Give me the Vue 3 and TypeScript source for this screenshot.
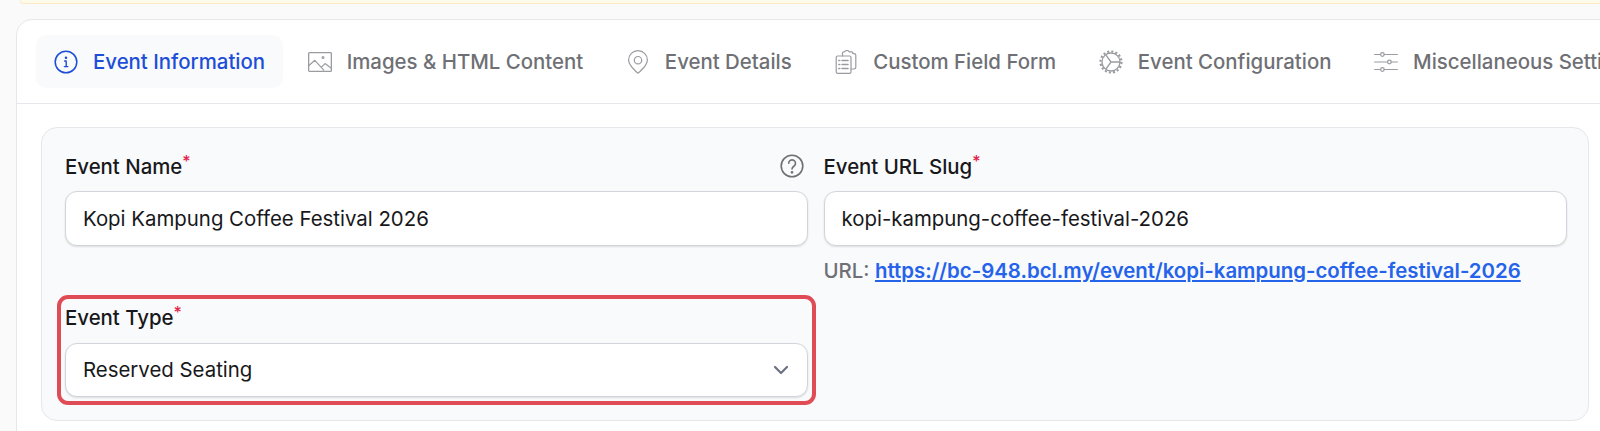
<script setup lang="ts">
const tabs = [
  { key: 'info', label: 'Event Information' },
  { key: 'image', label: 'Images & HTML Content' },
  { key: 'pin', label: 'Event Details' },
  { key: 'form', label: 'Custom Field Form' },
  { key: 'gear', label: 'Event Configuration' },
  { key: 'sliders', label: 'Miscellaneous Settings' },
]
</script>

<template>
  <div class="page">
    <div class="banner"></div>
    <section class="card">
      <nav class="tabs">
        <div v-for="(t, i) in tabs" :key="t.key" class="tab" :class="{ active: i === 0 }">
          <svg class="ico" viewBox="0 0 24 24" fill="none" stroke="currentColor" stroke-width="1.2" stroke-linecap="round" stroke-linejoin="round">
            <template v-if="t.key === 'info'">
              <circle cx="12" cy="12" r="10.8" stroke-width="1.5" />
              <path d="M10.6 11h1.6v5.6M10.4 16.6h3.4" stroke-width="1.4" />
              <circle cx="12" cy="7.7" r=".7" fill="currentColor" />
            </template>
            <template v-else-if="t.key === 'image'">
              <rect x=".6" y="2.6" width="22.8" height="18.800" rx="1" stroke-width="1.4" />
              <path d="M1 15.500l5.800-5.200 9 9.800M13.400 17.200l3.600-3.600 6 4.400" />
              <circle cx="15" cy="7.600" r=".9" />
            </template>
            <template v-else-if="t.key === 'pin'">
              <path d="M12 23.200s-9.400-7.400-9.400-13.200a9.400 9.400 0 0 1 18.800 0c0 5.800-9.400 13.200-9.400 13.200z" />
              <circle cx="12" cy="10.200" r="3.700" />
            </template>
            <template v-else-if="t.key === 'form'">
              <path d="M8.500 5.800V3.200c0-.8.600-1.400 1.400-1.400h.8c.5-1 1.300-1.300 2.200-1.300s1.700.3 2.200 1.300h2.500c.8 0 1.400.6 1.400 1.400" />
              <path d="M18.800 3.600h1.200c1 0 1.800.7 1.800 1.700v12c0 1-.8 1.700-1.800 1.700h-3" />
              <rect x="2.200" y="6" width="14.800" height="17.400" rx="1.400" />
              <path d="M8 10.500h6M8 14.500h6M8 18.500h6M4.800 10.500h1M4.800 14.500h1M4.800 18.500h1" stroke-width="1.500" />
            </template>
            <template v-else-if="t.key === 'gear'">
              <circle cx="12" cy="12" r="9" stroke-width="1.300" />
              <circle cx="12" cy="12" r="10.500" stroke-width="2.200" stroke-dasharray="2.100 2.020" stroke-linecap="butt" />
              <path d="M12 12l-5-6.800M12 12h9M12 12l-5 6.800" stroke-width="1.300" />
            </template>
            <template v-else>
              <path d="M.6 4.500h6M10.200 4.500h13.200M.6 12h13M17.200 12h6.200M.6 19.500h6M10.200 19.500h13.200" />
              <circle cx="8.400" cy="4.500" r="1.800" />
              <circle cx="15.400" cy="12" r="1.800" />
              <circle cx="8.400" cy="19.500" r="1.800" />
            </template>
          </svg>
          <span class="tab-label">{{ t.label }}</span>
        </div>
      </nav>

      <div class="panel">
        <div class="field">
          <div class="label-row">
            <label class="label">Event Name<sup class="req">*</sup></label>
            <svg class="help" viewBox="0 0 24 24" fill="none" stroke="currentColor" stroke-width="1.600" stroke-linecap="round" stroke-linejoin="round">
              <circle cx="12" cy="12" r="10.800" />
              <path d="M8.700 9.300a3.400 3.400 0 1 1 5.400 2.700c-1.300.9-2.100 1.500-2.100 3" />
              <circle cx="12" cy="18.300" r=".6" fill="currentColor" />
            </svg>
          </div>
          <div class="input">Kopi Kampung Coffee Festival 2026</div>
        </div>

        <div class="field">
          <div class="label-row">
            <label class="label">Event URL Slug<sup class="req">*</sup></label>
          </div>
          <div class="input">kopi-kampung-coffee-festival-2026</div>
          <p class="url">URL: <a class="link">https://bc-948.bcl.my/event/kopi-kampung-coffee-festival-2026</a></p>
        </div>

        <div class="field highlighted">
          <div class="label-row">
            <label class="label">Event Type<sup class="req">*</sup></label>
          </div>
          <div class="input select">
            <span>Reserved Seating</span>
            <svg class="chev" viewBox="0 0 16 10" fill="none" stroke="currentColor" stroke-width="2.200" stroke-linecap="round" stroke-linejoin="round">
              <path d="M2 2l6 6 6-6" />
            </svg>
          </div>
        </div>
      </div>
    </section>
  </div>
</template>

<style>
html, body { margin: 0; background: #fafafa; overflow: hidden; }
</style>

<style scoped>
.page {
  width: 1600px;
  height: 431px;
  overflow: hidden;
  background: #fafafa;
  font-family: Inter, "Noto Sans", sans-serif;
  padding: 0 0 0 16px;
  box-sizing: border-box;
}
.banner {
  height: 4px;
  margin-left: 4px;
  margin-right: -4px;
  background: #fffbeb;
  border: 1px solid #fde9c4;
  border-top: 0;
  border-radius: 0 0 12px 12px;
  box-sizing: border-box;
}
.card {
  margin-top: 15px;
  margin-right: -24px;
  height: 440px;
  background: #fff;
  border: 1px solid #e5e7eb;
  border-radius: 16px;
  box-sizing: border-box;
}
.tabs {
  display: flex;
  align-items: center;
  gap: 6.6px;
  height: 83px;
  padding: 0 0 0 19px;
  border-bottom: 1px solid #e5e7eb;
  overflow: hidden;
}
.tab {
  display: flex;
  align-items: center;
  flex: none;
  gap: 15px;
  height: 53px;
  padding: 0 18px;
  border-radius: 10px;
  color: #6f7075;
  font-size: 20.4px;
  font-weight: 500;
  white-space: nowrap;
}
.tab.active {
  color: #1d4ed8;
  background: #f9fafb;
}
.ico {
  width: 24px;
  height: 24px;
  flex: none;
  color: #9a9ca1;
}
.active .ico { color: #1d4ed8; }
.panel {
  display: grid;
  grid-template-columns: 743px 743px;
  grid-auto-rows: min-content;
  column-gap: 15.5px;
  row-gap: 20px;
  margin: 23px 34px 0 24px;
  height: 294px;
  padding: 23px 23px 0;
  background: #f9fafb;
  border: 1px solid #e5e7eb;
  border-radius: 16px;
  box-sizing: border-box;
}
.label-row {
  display: flex;
  align-items: center;
  justify-content: space-between;
  height: 30px;
  margin-bottom: 10px;
}
.label {
  color: #18181b;
  font-size: 20.4px;
  font-weight: 500;
}
.req {
  color: #e11d48;
  font-size: 16px;
  line-height: 0;
  vertical-align: 7px;
}
.help {
  width: 24px;
  height: 24px;
  margin-right: 4px;
  color: #6f7075;
}
.input {
  display: flex;
  align-items: center;
  justify-content: space-between;
  height: 54.5px;
  padding: 0 17px;
  background: #fff;
  border: 1px solid #d1d5db;
  border-radius: 12px;
  box-shadow: 0 1px 2px rgba(0, 0, 0, .12);
  box-sizing: border-box;
  color: #18181b;
  font-size: 20.4px;
}
.url {
  margin: 12px 0 0;
  color: #6f7075;
  font-size: 20.4px;
  line-height: 25px;
  font-weight: 500;
}
.link {
  color: #2563eb;
  font-weight: 600;
  text-decoration: underline;
}
.highlighted {
  grid-column: 1;
  position: relative;
}
.highlighted::after {
  content: "";
  position: absolute;
  inset: -8px -8px -8px;
  border: 4px solid #df4c55;
  border-radius: 11px;
  pointer-events: none;
}
.chev {
  width: 16px;
  height: 10px;
  margin-right: 1px;
  color: #6b7280;
}
</style>
